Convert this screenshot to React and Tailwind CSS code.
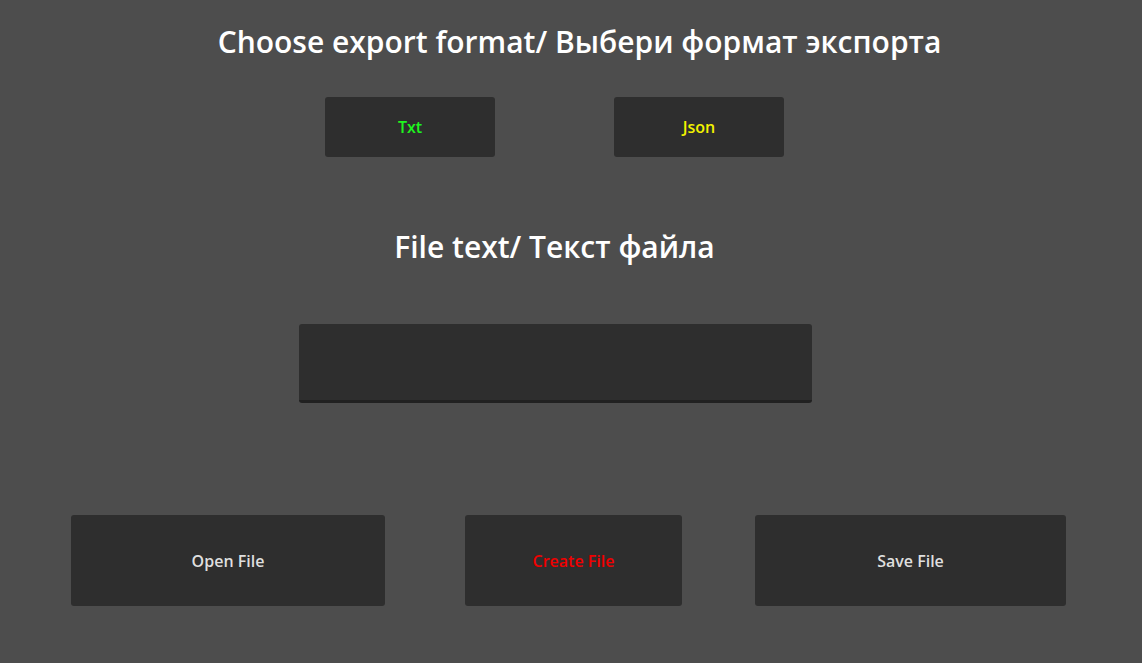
export default function App() {
  const font = { fontFamily: '"Open Sans", "Noto Sans", sans-serif' };
  return (
    <div className="w-[1142px] h-[663px] bg-[#4d4d4d] flex flex-col overflow-hidden" style={font}>
      {/* заголовок */}
      <h1 className="mt-[24px] h-[36px] pl-[17px] text-center text-white font-semibold text-[30px] leading-[36px]">
        Choose export format/ Выбери формат экспорта
      </h1>

      <div className="mt-[37px] flex">
        <button className="ml-[325px] w-[170px] h-[60px] rounded-[3px] bg-[#2e2e2e] text-[#1ef51e] font-semibold text-base">
          Txt
        </button>
        <button className="ml-[119px] w-[170px] h-[60px] rounded-[3px] bg-[#2e2e2e] text-[#f2f200] font-semibold text-base">
          Json
        </button>
      </div>

      <h2 className="mt-[73px] h-[34px] pr-[33px] text-center text-white font-semibold text-[30px] leading-[34px]">
        File text/ Текст файла
      </h2>

      <div className="mt-[60px] flex">
        <input
          className="ml-[299px] w-[513px] h-[79px] rounded-[3px] bg-[#2e2e2e] border-b-[3px] border-[#212121] outline-none text-[#dfdfdf] px-2 text-base"
          type="text"
        />
      </div>

      <div className="mt-[112px] flex">
        <button className="ml-[71px] w-[314px] h-[91px] rounded-[3px] bg-[#2e2e2e] text-[#dfdfdf] font-semibold text-base">
          Open File
        </button>
        <button className="ml-[80px] w-[217px] h-[91px] rounded-[3px] bg-[#2e2e2e] text-[#f00000] font-semibold text-base">
          Create File
        </button>
        <button className="ml-[73px] w-[311px] h-[91px] rounded-[3px] bg-[#2e2e2e] text-[#dfdfdf] font-semibold text-base">
          Save File
        </button>
      </div>
    </div>
  );
}
